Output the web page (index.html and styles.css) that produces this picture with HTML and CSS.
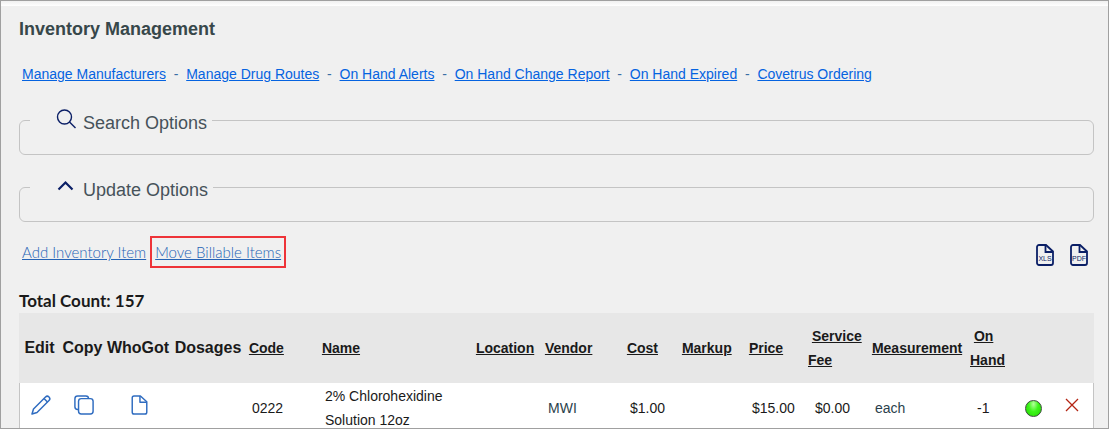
FILE: index.html
```html
<!DOCTYPE html>
<html lang="en">

<head>
	<meta charset="UTF-8" />
	<meta name="viewport" content="width=device-width,initial-scale=1" />
	<title>Inventory Management</title>
	<link rel="stylesheet" href="styles.css">
</head>

<body>
	<div class="topbar"></div>
	<main class="page">
		<h1 class="title">Inventory Management</h1>

		<nav class="links">
			<a href="#">Manage Manufacturers</a>&nbsp; - &nbsp;<a href="#">Manage Drug Routes</a>&nbsp; - &nbsp;<a href="#">On Hand Alerts</a>&nbsp; - &nbsp;<a href="#">On Hand Change Report</a>&nbsp; - &nbsp;<a href="#">On Hand Expired</a>&nbsp; - &nbsp;<a href="#">Covetrus Ordering</a>
		</nav>

		<fieldset class="options">
			<legend>
				<svg class="legend-icon" viewBox="0 0 20 20" fill="none" stroke="#0b1f66" stroke-width="1.4">
					<circle cx="8.5" cy="8" r="7" />
					<path d="M13.5 13l6 6" />
				</svg>
				Search Options
			</legend>
		</fieldset>

		<fieldset class="options">
			<legend>
				<svg class="legend-icon" viewBox="0 0 20 20" fill="none" stroke="#0b1f66" stroke-width="2.2">
					<path d="M2.5 13.5l7-7 7 7" />
				</svg>
				Update Options
			</legend>
		</fieldset>

		<div class="actions">
			<div class="action-links">
				<a href="#">Add Inventory Item</a>
				<a href="#" class="marked">Move Billable Items</a>
			</div>
			<div class="exports">
				<button type="button" aria-label="Export XLS">
					<svg viewBox="0 0 18 22" fill="none" stroke="#0b1f66" stroke-width="1.8">
						<path d="M3 1h7l7 6.5V19a2 2 0 0 1-2 2H3a2 2 0 0 1-2-2V3a2 2 0 0 1 2-2z" />
						<path d="M9.5 1v7H17" />
						<text x="9" y="17" text-anchor="middle">XLS</text>
					</svg>
				</button>
				<button type="button" aria-label="Export PDF">
					<svg viewBox="0 0 18 22" fill="none" stroke="#0b1f66" stroke-width="1.8">
						<path d="M3 1h7l7 6.5V19a2 2 0 0 1-2 2H3a2 2 0 0 1-2-2V3a2 2 0 0 1 2-2z" />
						<path d="M9.5 1v7H17" />
						<text x="9" y="17" text-anchor="middle">PDF</text>
					</svg>
				</button>
			</div>
		</div>

		<div class="total">Total Count: 157</div>

		<table class="items">
			<colgroup>
				<col class="c-edit">
				<col class="c-copy">
				<col class="c-who">
				<col class="c-dose">
				<col class="c-code">
				<col class="c-name">
				<col class="c-location">
				<col class="c-vendor">
				<col class="c-cost">
				<col class="c-markup">
				<col class="c-price">
				<col class="c-fee">
				<col class="c-measure">
				<col class="c-hand">
				<col class="c-status">
				<col class="c-delete">
			</colgroup>
			<thead>
				<tr>
					<th class="tool">Edit</th>
					<th class="tool">Copy</th>
					<th class="tool">WhoGot</th>
					<th class="tool">Dosages</th>
					<th>&nbsp;<a href="#">Code</a></th>
					<th>&nbsp;<a href="#">Name</a></th>
					<th>&nbsp;<a href="#">Location</a></th>
					<th>&nbsp;<a href="#">Vendor</a></th>
					<th>&nbsp;<a href="#">Cost</a></th>
					<th>&nbsp;<a href="#">Markup</a></th>
					<th>&nbsp;<a href="#">Price</a></th>
					<th>&nbsp;<a href="#">Service Fee</a></th>
					<th>&nbsp;<a href="#">Measurement</a></th>
					<th>&nbsp;<a href="#">On Hand</a></th>
					<th></th>
					<th></th>
				</tr>
			</thead>
			<tbody>
				<tr>
					<td class="tool">
						<button type="button" aria-label="Edit">
							<svg width="20" height="20" viewBox="0 0 20 20" fill="none" stroke="#2f6cc0" stroke-width="1.5" stroke-linejoin="round">
								<path d="M1 19l1.5-5L14.500 2a2.300 2.300 0 0 1 3.500 3.500L6 17.500z" />
								<path d="M13 3.500l3.500 3.500" />
							</svg>
						</button>
					</td>
					<td class="tool">
						<button type="button" aria-label="Copy">
							<svg width="20" height="20" viewBox="0 0 22 22" fill="none" stroke="#2f6cc0" stroke-width="1.6">
								<rect x="5" y="4" width="16" height="17" rx="3" />
								<path d="M5 16H4a3 3 0 0 1-3-3V4a3 3 0 0 1 3-3h9a3 3 0 0 1 3 3" />
							</svg>
						</button>
					</td>
					<td class="tool">
						<button type="button" aria-label="WhoGot">
							<svg width="17" height="20" viewBox="0 0 18 22" fill="none" stroke="#2f6cc0" stroke-width="1.6" stroke-linejoin="round">
								<path d="M3 1h7l7 6.5V19a2 2 0 0 1-2 2H3a2 2 0 0 1-2-2V3a2 2 0 0 1 2-2z" />
								<path d="M9.5 1v7H17" />
							</svg>
						</button>
					</td>
					<td></td>
					<td>0222</td>
					<td>2% Chlorohexidine Solution 12oz</td>
					<td></td>
					<td class="vendor">MWI</td>
					<td>$1.00</td>
					<td></td>
					<td>$15.00</td>
					<td>$0.00</td>
					<td class="measure">each</td>
					<td>-1</td>
					<td><span class="dot"></span></td>
					<td class="tool">
						<button type="button" aria-label="Delete">
							<svg width="20" height="20" viewBox="0 0 20 20" stroke="#b32413" stroke-width="1.3">
								<path d="M4 4l12 12M16 4L4 16" />
							</svg>
						</button>
					</td>
				</tr>
			</tbody>
		</table>
	</main>
</body>

</html>
```
FILE: styles.css
```css
* {
	box-sizing: border-box;
	margin: 0;
	padding: 0;
}

body {
	height: 100vh;
	overflow: hidden;
	border: 1px solid #a0a0a0;
	background: #f0f0f0;
	font-family: "Liberation Sans", Arial, sans-serif;
	font-size: 14px;
	line-height: 24px;
	color: #1a1a1a;
}

button {
	display: inline-flex;
	border: none;
	background: none;
	cursor: pointer;
}

.topbar {
	height: 5px;
	background: linear-gradient(#f0f0f0, #ffffff);
}

.page {
	padding: 11px 14px 0 18px;
}

.title {
	font-size: 18px;
	color: #37474a;
}

.links {
	margin-top: 21px;
	padding-left: 3px;
	color: #3a6ea5;
}

.links a {
	color: #0563e0;
}

.options {
	margin-top: 19px;
	padding: 0 10px 19px;
	border: 1px solid #c4c4c4;
	border-radius: 6px;
}

.options + .options {
	margin-top: 17px;
}

.options legend {
	display: flex;
	gap: 7px;
	padding: 6px 5px 0 26px;
	font-size: 18px;
	color: #46525a;
}

.legend-icon {
	width: 20px;
	height: 20px;
	margin-top: -2px;
}

.actions {
	display: flex;
	justify-content: space-between;
	align-items: center;
	margin-top: 14px;
	padding: 0 6px 0 3px;
}

.action-links {
	display: flex;
	align-items: center;
	gap: 4px;
	font-family: Lato, sans-serif;
	font-size: 15px;
	font-weight: 300;
}

.action-links a {
	color: #2563b5;
}

.action-links .marked {
	padding: 2px 3px;
	border: 2px solid #ee3338;
}

.exports {
	display: flex;
	gap: 16px;
	padding-top: 6px;
}

.exports svg {
	width: 18px;
	height: 22px;
}

.exports text {
	font-family: "Liberation Sans", sans-serif;
	font-size: 7px;
	fill: #0b1f66;
	stroke: none;
}

.total {
	margin-top: 21px;
	font-family: Lato, sans-serif;
	font-size: 17px;
	font-weight: 700;
}

.items {
	width: 100%;
	table-layout: fixed;
	border-collapse: separate;
	border-spacing: 0;
}

.items th {
	height: 70px;
	background: #e7e7e7;
	text-align: left;
}

.items th a {
	color: inherit;
}

.items td {
	height: 50px;
	padding: 1px 0 1px 7px;
	background: #ffffff;
}

.items th.tool {
	padding-right: 2px;
	font-size: 16px;
	text-align: center;
}

.items td.tool {
	padding: 0;
	text-align: center;
}

.items td:first-child {
	border-left: 1px solid #c4c4c4;
}

.items td:last-child {
	border-right: 1px solid #c4c4c4;
}

.vendor,
.measure {
	color: #2b3f4c;
}

.c-edit { width: 43px; }
.c-copy { width: 43px; }
.c-who { width: 68px; }
.c-dose { width: 72px; }
.c-code { width: 73px; }
.c-location { width: 69px; }
.c-vendor { width: 82px; }
.c-cost { width: 55px; }
.c-markup { width: 67px; }
.c-price { width: 63px; }
.c-fee { width: 60px; }
.c-measure { width: 102px; }
.c-hand { width: 48px; }
.c-status { width: 33px; }
.c-delete { width: 43px; }

.dot {
	display: block;
	width: 17px;
	height: 17px;
	border: 1px solid #3c4a3c;
	border-radius: 50%;
	background: radial-gradient(ellipse at 50% 20%, #b4ff9c, #3df51a 45%, #22d400);
}
```
